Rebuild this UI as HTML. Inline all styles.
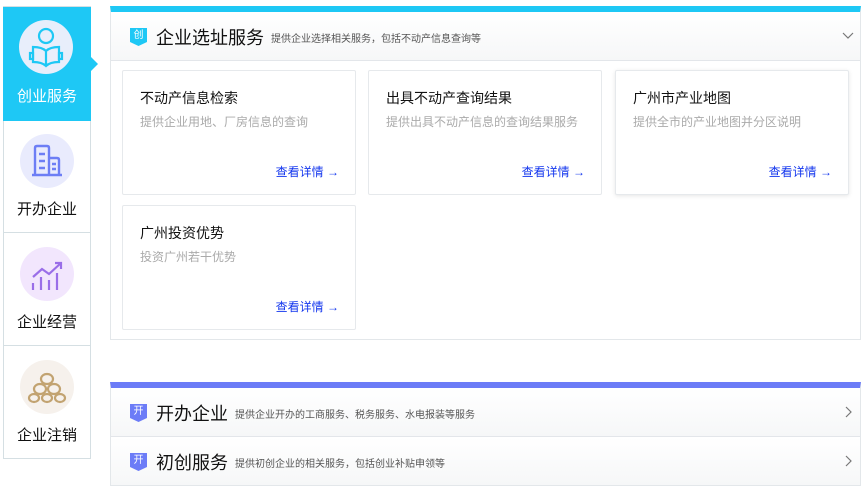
<!DOCTYPE html><html><head><meta charset="utf-8"><style>
*{margin:0;padding:0;box-sizing:border-box}
body{width:866px;height:491px;background:#fff;font-family:"Liberation Sans","Noto Sans CJK SC",sans-serif;position:relative;overflow:hidden}
.nav{position:absolute;left:3px;top:6px;width:88px;height:453px;border:1px solid #d5dfe3;background:#fff}
.it{position:absolute;left:0;width:86px;height:113px;border-bottom:1px solid #d5dfe3;text-align:center}
.it .c{position:absolute;left:16px;top:14px;width:54px;height:54px;border-radius:50%}
.it .t{position:absolute;left:0;right:0;top:78px;font-size:15px;color:#111}
.act{background:#1ec8f5;border:none;left:-1px;top:-1px;width:88px;height:114px}
.act .t{color:#fff}
.act:after{content:"";position:absolute;right:-7px;top:50px;border:7px solid transparent;border-left:7px solid #1ec8f5;border-right:0}
.panel{position:absolute;left:110px;width:751px;border:1px solid #e3e7ea;border-top:none}
.hd{height:49px;background:linear-gradient(#fff,#f6f7f8);border-bottom:1px solid #e3e6ea;position:relative}
.badge{position:absolute;left:19px;top:16px;width:17px;height:18px;color:#fff;font-size:10px;text-align:center;line-height:16px;clip-path:polygon(0 0,100% 0,100% 78%,50% 100%,0 78%)}
.ht{position:absolute;left:45px;top:12px;font-size:18px;color:#111;white-space:nowrap}
.hs{font-size:10px;color:#555;margin-left:7px;vertical-align:2px}
.card{position:absolute;width:234px;height:125px;border:1px solid #e6e9ec;border-radius:2px;background:#fff}
.card h4{position:absolute;left:17px;top:17px;font-size:14px;font-weight:normal;color:#111}
.card p{position:absolute;left:17px;top:42px;font-size:12px;color:#aaa}
.card a{position:absolute;right:16px;top:92px;font-size:12px;color:#1437ee;text-decoration:none}
.chev{position:absolute;right:6px}
</style></head><body>
<div class="nav">
 <div class="it act" style="top:0"><div class="c" style="background:#e8eefb;top:13px">
  <svg width="54" height="54" viewBox="0 0 54 54"><g fill="none" stroke="#1ec8f5" stroke-width="2.2"><circle cx="27" cy="16" r="7"/><path d="M14 27v15c5 0 10 1 13 4 3-3 8-4 13-4V27c-5 0-10 1-13 4-3-3-8-4-13-4zM27 31v15"/><rect x="11" y="33" width="3" height="6"/><rect x="40" y="33" width="3" height="6"/></g></svg></div><div class="t" style="top:78px">创业服务</div></div>
 <div class="it" style="top:113px"><div class="c" style="background:#e9ebfd">
  <svg width="54" height="54" viewBox="0 0 54 54"><g fill="none" stroke="#6d7ef5" stroke-width="2.4"><path d="M15 40V14q0-2 2-2h10q2 0 2 2v26M29 24h8q2 0 2 2v14M12 41h30M19 20h6M19 27h6M19 34h6M32 30h4M32 35h4"/></g></svg></div><div class="t">开办企业</div></div>
 <div class="it" style="top:226px"><div class="c" style="background:#f2e6fd">
  <svg width="54" height="54" viewBox="0 0 54 54"><g fill="none" stroke="#9a6ee8" stroke-width="2.2"><path d="M13 30l9-8 7 5 12-11M35 16h6v6M13 36v7M21 30v13M29 33v10M37 26v17"/></g></svg></div><div class="t">企业经营</div></div>
 <div class="it" style="top:339px;border-bottom:none"><div class="c" style="background:#f6f1ec">
  <svg width="54" height="54" viewBox="0 0 54 54"><g fill="none" stroke="#c2a371" stroke-width="2.2"><ellipse cx="27" cy="19" rx="6" ry="5"/><ellipse cx="20" cy="29" rx="6" ry="5"/><ellipse cx="34" cy="29" rx="6" ry="5"/><ellipse cx="14" cy="38" rx="5" ry="4"/><ellipse cx="27" cy="38" rx="5" ry="4"/><ellipse cx="40" cy="38" rx="5" ry="4"/></g></svg></div><div class="t">企业注销</div></div>
</div>

<div class="panel" style="top:6px;height:334px;border-top:6px solid #1ec8f5">
 <div class="hd"><div class="badge" style="background:#1ec8f5">创</div><div class="ht">企业选址服务<span class="hs">提供企业选择相关服务，包括不动产信息查询等</span></div><svg class="chev" style="top:20px" width="12" height="8" viewBox="0 0 12 8"><path d="M1 1l5 5 5-5" fill="none" stroke="#777" stroke-width="1.2"/></svg></div>
 <div class="card" style="left:11px;top:58px"><h4>不动产信息检索</h4><p>提供企业用地、厂房信息的查询</p><a>查看详情 →</a></div>
 <div class="card" style="left:257px;top:58px"><h4>出具不动产查询结果</h4><p>提供出具不动产信息的查询结果服务</p><a>查看详情 →</a></div>
 <div class="card" style="left:504px;top:58px;box-shadow:0 1px 4px rgba(0,0,0,.1)"><h4>广州市产业地图</h4><p>提供全市的产业地图并分区说明</p><a>查看详情 →</a></div>
 <div class="card" style="left:11px;top:193px"><h4>广州投资优势</h4><p>投资广州若干优势</p><a>查看详情 →</a></div>
</div>

<div class="panel" style="top:382px;height:104px;border-top:6px solid #6c7cf7">
 <div class="hd" style="height:49px"><div class="badge" style="background:#6c7cf7">开</div><div class="ht">开办企业<span class="hs">提供企业开办的工商服务、税务服务、水电报装等服务</span></div><svg class="chev" style="top:18px;right:8px" width="7" height="12" viewBox="0 0 7 12"><path d="M1 1l5 5-5 5" fill="none" stroke="#777" stroke-width="1.2"/></svg></div>
 <div class="hd" style="height:48px;border-bottom:none"><div class="badge" style="background:#6c7cf7">开</div><div class="ht">初创服务<span class="hs">提供初创企业的相关服务，包括创业补贴申领等</span></div><svg class="chev" style="top:18px;right:8px" width="7" height="12" viewBox="0 0 7 12"><path d="M1 1l5 5-5 5" fill="none" stroke="#777" stroke-width="1.2"/></svg></div>
</div>
</body></html>
